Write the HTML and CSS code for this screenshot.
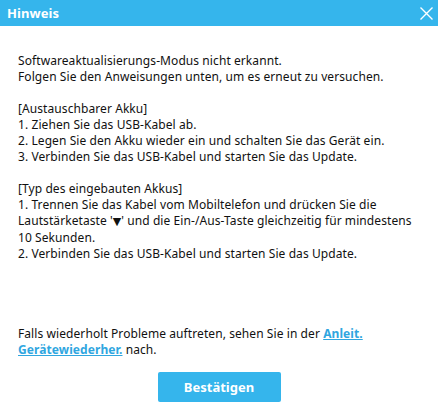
FILE: index.html
```html
<!DOCTYPE html>
<html lang="de">
<head>
    <meta charset="UTF-8">
    <title>Hinweis</title>
    <link rel="stylesheet" href="styles.css">
</head>
<body>

<div class="dialog">
    <div class="titlebar">
        <span class="title">Hinweis</span>
        <button class="close-btn" aria-label="Schließen">
            <svg width="13" height="13" viewBox="0 0 13 13">
                <path d="M0.5 0.5 L12.5 12.5 M12.5 0.5 L0.5 12.5" stroke="#fff" stroke-width="1.4" fill="none"/>
            </svg>
        </button>
    </div>

    <div class="content">
        <p>Softwareaktualisierungs-Modus nicht erkannt.<br>
        Folgen Sie den Anweisungen unten, um es erneut zu versuchen.</p>

        <p>[Austauschbarer Akku]<br>
        1. Ziehen Sie das USB-Kabel ab.<br>
        2. Legen Sie den Akku wieder ein und schalten Sie das Gerät ein.<br>
        3. Verbinden Sie das USB-Kabel und starten Sie das Update.</p>

        <p>[Typ des eingebauten Akkus]<br>
        1. Trennen Sie das Kabel vom Mobiltelefon und drücken Sie die<br>
        Lautstärketaste '<span class="key">▼</span>' und die Ein-/Aus-Taste gleichzeitig für mindestens<br>
        10 Sekunden.<br>
        2. Verbinden Sie das USB-Kabel und starten Sie das Update.</p>
    </div>

    <div class="help">
        Falls wiederholt Probleme auftreten, sehen Sie in der <a href="#">Anleit.<br>Gerätewiederher.</a> nach.
    </div>

    <div class="actions">
        <button class="confirm-btn">Bestätigen</button>
    </div>
</div>

</body>
</html>
```

FILE: styles.css
```css
body {
    margin: 0;
    background: #fff;
    font-family: "Noto Sans", "Open Sans", sans-serif;
    font-size: 12px;
    letter-spacing: 0.08px;
    color: #111;
}
.dialog {
    width: 438px;
    height: 409px;
    display: flex;
    flex-direction: column;
    background: #fff;
}
.titlebar {
    height: 26px;
    background: #35b5ec;
    display: flex;
    align-items: center;
    justify-content: space-between;
    padding: 0 5px 0 7px;
}
.title {
    color: #fff;
    font-weight: bold;
    font-size: 13px;
}
.close-btn {
    background: none;
    border: none;
    padding: 0;
    width: 13px;
    height: 13px;
    display: flex;
    cursor: pointer;
}
.content {
    padding: 27px 18px 0;
}
.content p {
    margin: 0 0 16px;
    line-height: 16px;
}
.content p:last-child {
    margin-bottom: 0;
}
.key {
    font-family: "DejaVu Sans", sans-serif;
    font-size: 11px;
    letter-spacing: 0;
}
.help {
    margin-top: 64px;
    padding: 0 18px;
    line-height: 16px;
}
.help a {
    color: #2fa6df;
    font-weight: bold;
    text-decoration: underline;
}
.actions {
    display: flex;
    justify-content: center;
    margin-top: 14px;
}
.confirm-btn {
    width: 123px;
    height: 30px;
    background: #35b5ec;
    border: none;
    border-radius: 2px;
    color: #fff;
    font-family: inherit;
    font-weight: bold;
    font-size: 13px;
    cursor: pointer;
}
```
